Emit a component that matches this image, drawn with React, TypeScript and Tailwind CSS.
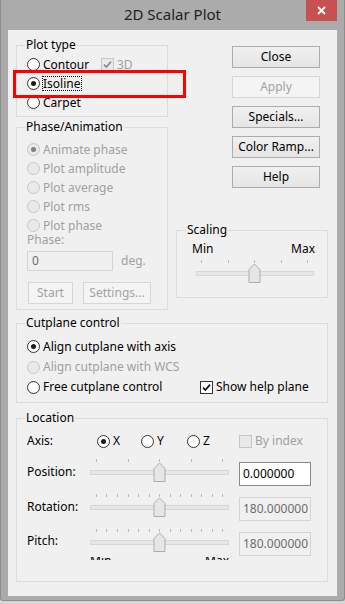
import type { ReactNode } from "react"

/*
 ====================================
 SMALL WIN8 CONTROLS
 ====================================
*/

function Radio({
 checked = false,
 disabled = false,
}: {
 checked?: boolean
 disabled?: boolean
}) {
 return (
  <span
   className={`
    flex
    h-[13px]
    w-[13px]
    shrink-0
    items-center
    justify-center
    rounded-full
    border
    ${disabled ? "border-[#c6c6c6] bg-[#e9e9e9]" : "border-[#333333] bg-white"}
   `}
  >
   {checked && (
    <span
     className={`
      h-[5px]
      w-[5px]
      rounded-full
      ${disabled ? "bg-[#7f7f7f]" : "bg-[#1b1b1b]"}
     `}
    />
   )}
  </span>
 )
}

function Check({
 checked = false,
 disabled = false,
}: {
 checked?: boolean
 disabled?: boolean
}) {
 return (
  <span
   className={`
    flex
    h-[13px]
    w-[13px]
    shrink-0
    items-center
    justify-center
    border
    ${disabled ? "border-[#c6c6c6] bg-[#e9e9e9]" : "border-[#333333] bg-white"}
   `}
  >
   {checked && (
    <svg width="9" height="9" viewBox="0 0 9 9">
     <path
      d="M1 4.6 L3.4 7 L8 1.6"
      fill="none"
      stroke={disabled ? "#8c8c8c" : "#111111"}
      strokeWidth="1.7"
     />
    </svg>
   )}
  </span>
 )
}

function Btn({
 children,
 disabled = false,
 w,
}: {
 children: ReactNode
 disabled?: boolean
 w: string
}) {
 return (
  <div
   className={`
    flex
    h-[22px]
    ${w}
    items-center
    justify-center
    border
    ${disabled
     ? "border-[#d6d6d6] bg-[#f4f4f4] text-[#a3a3a3]"
     : "border-[#acacac] bg-linear-to-b from-[#f0f0f0] to-[#e5e5e5] text-black"}
   `}
  >
   {children}
  </div>
 )
}

function Slider({
 width,
 ticks,
 thumb,
}: {
 width: number
 ticks: number[]
 thumb: number
}) {
 return (
  <svg width={width} height={24} className="block">
   {ticks.map((x) => (
    <line
     key={x}
     x1={x + 0.5}
     x2={x + 0.5}
     y1={0}
     y2={3}
     stroke="#b9b9b9"
    />
   ))}
   <rect
    x={0.5}
    y={11.5}
    width={width - 1}
    height={4}
    fill="#e7e7e7"
    stroke="#d6d6d6"
   />
   <path
    d={`M${thumb - 5} 9.5 L${thumb + 0.5} 4 L${thumb + 6} 9.5 L${thumb + 6} 22.5 L${thumb - 5} 22.5 Z`}
    fill="#e6e6e6"
    stroke="#adadad"
   />
  </svg>
 )
}

const fine = [
 6, 16, 27, 38, 48, 59, 69, 80, 90, 101, 111, 122, 132,
]

function Field({
 value,
 disabled = false,
}: {
 value: string
 disabled?: boolean
}) {
 return (
  <div
   className={`
    ml-[10px]
    mt-[5px]
    h-[24px]
    w-[72px]
    overflow-hidden
    whitespace-nowrap
    border
    pl-[3px]
    leading-[22px]
    ${disabled
     ? "border-[#d4d4d4] bg-[#f0f0f0] text-[#6d6d6d]"
     : "border-[#8a8a8a] bg-white text-black"}
   `}
  >
   {value}
  </div>
 )
}

const gray = "text-[#a0a0a0]"

export default function App() {
 return (
  <div
   className="
    h-[604px]
    w-[345px]
    bg-[#d6d6d6]
    font-['Noto_Sans',sans-serif]
    text-[12px]
    leading-[16px]
    text-black
   "
  >
   <div
    className="
     h-[601px]
     w-[345px]
     rounded-b-[3px]
     border-x
     border-b
     border-[#8c8c8c]
     bg-[#ababab]
    "
   >

    {/* TITLE BAR */}

    <div className="grid h-[30px] grid-cols-[1fr_auto_1fr]">
     <div />
     <div className="pt-[4px] text-[15px] leading-[20px] text-[#222222]">
      2D Scalar Plot
     </div>
     <div className="flex justify-end pr-[7px]">
      <div className="flex h-[21px] w-[31px] items-center justify-center bg-[#c75050]">
       <svg width="9" height="9" viewBox="0 0 9 9">
        <path d="M1 1 L8 8 M8 1 L1 8" stroke="white" strokeWidth="1.8" />
       </svg>
      </div>
     </div>
    </div>

    {/* CLIENT */}

    <div
     className="
      relative
      ml-[7px]
      h-[566px]
      w-[329px]
      bg-[#f0f0f0]
      pl-[8px]
      pt-[7px]
     "
    >
     <div className="flex gap-[8px]">

      {/* LEFT COLUMN */}

      <div className="w-[152px]">
       <fieldset className="h-[80px] border border-[#dcdcdc]">
        <legend className="ml-[8px] px-px">Plot type</legend>
        <div className="pl-[10px] pt-[2px]">
         <div className="flex h-[19px] items-center">
          <Radio />
          <span className="ml-[3px] w-[58px]">Contour</span>
          <Check checked disabled />
          <span className={`ml-[3px] ${gray}`}>3D</span>
         </div>
         <div className="flex h-[19px] items-center">
          <Radio checked />
          <span
           className="
            ml-[2px]
            border
            border-dotted
            border-black
            pr-px
            leading-[13px]
           "
          >
           Isoline
          </span>
         </div>
         <div className="flex h-[19px] items-center">
          <Radio />
          <span className="ml-[3px]">Carpet</span>
         </div>
        </div>
       </fieldset>

       <fieldset className="mt-[2px] h-[191px] border border-[#dcdcdc]">
        <legend className="ml-[8px] px-px">Phase/Animation</legend>
        <div className="pl-[10px] pt-[5px]">
         {[
          "Animate phase",
          "Plot amplitude",
          "Plot average",
          "Plot rms",
          "Plot phase",
         ].map((label, i) => (
          <div key={label} className="flex h-[19px] items-center">
           <Radio checked={i === 0} disabled />
           <span className={`ml-[3px] ${gray}`}>{label}</span>
          </div>
         ))}

         <div className={`h-[10px] leading-[10px] ${gray}`}>Phase:</div>

         <div className="mt-[6px] flex items-center">
          <div
           className="
            h-[20px]
            w-[86px]
            border
            border-[#d4d4d4]
            pl-[4px]
            leading-[18px]
            text-[#6d6d6d]
           "
          >
           0
          </div>
          <span className={`ml-[8px] ${gray}`}>deg.</span>
         </div>

         <div className="ml-px mt-[11px] flex gap-[10px]">
          <Btn disabled w="w-[45px]">Start</Btn>
          <Btn disabled w="w-[68px]">Settings...</Btn>
         </div>
        </div>
       </fieldset>
      </div>

      {/* RIGHT COLUMN */}

      <div className="w-[152px]">
       <div className="ml-[56px] mt-[9px] flex flex-col gap-[8px]">
        <Btn w="w-[88px]">Close</Btn>
        <Btn disabled w="w-[88px]">Apply</Btn>
        <Btn w="w-[88px]">Specials...</Btn>
        <Btn w="w-[88px]">Color Ramp...</Btn>
        <Btn w="w-[88px]">Help</Btn>
       </div>

       <fieldset className="mt-[34px] h-[76px] border border-[#dcdcdc]">
        <legend className="ml-[9px] px-px">Scaling</legend>
        <div className="mt-[3px] flex h-[16px] justify-between pl-[15px] pr-[12px]">
         <span>Min</span>
         <span>Max</span>
        </div>
        <div className="ml-[19px] mt-[3px]">
         <Slider width={118} ticks={[5, 32, 58, 85, 111]} thumb={58} />
        </div>
       </fieldset>
      </div>
     </div>

     {/* CUTPLANE CONTROL */}

     <fieldset className="mt-[5px] h-[88px] w-[312px] border border-[#dcdcdc]">
      <legend className="ml-[8px] px-px">Cutplane control</legend>
      <div className="pl-[10px] pt-[5px]">
       <div className="flex h-[21px] items-center">
        <Radio checked />
        <span className="ml-[3px]">Align cutplane with axis</span>
       </div>
       <div className="flex h-[20px] items-center">
        <Radio disabled />
        <span className={`ml-[3px] ${gray}`}>Align cutplane with WCS</span>
       </div>
       <div className="flex h-[20px] items-center">
        <div className="flex w-[173px] items-center">
         <Radio />
         <span className="ml-[3px]">Free cutplane control</span>
        </div>
        <Check checked />
        <span className="ml-[3px]">Show help plane</span>
       </div>
      </div>
     </fieldset>

     {/* LOCATION */}

     <fieldset className="mt-[7px] h-[172px] w-[312px] border border-[#dcdcdc]">
      <legend className="ml-[8px] px-px">Location</legend>
      <div className="pl-[10px]">
       <div className="mt-[5px] flex h-[20px] items-center">
        <span className="w-[70px]">Axis:</span>
        <div className="flex w-[44px] items-center">
         <Radio checked />
         <span className="ml-[3px]">X</span>
        </div>
        <div className="flex w-[46px] items-center">
         <Radio />
         <span className="ml-[3px]">Y</span>
        </div>
        <div className="flex w-[52px] items-center">
         <Radio />
         <span className="ml-[3px]">Z</span>
        </div>
        <Check disabled />
        <span className={`ml-[3px] ${gray}`}>By index</span>
       </div>

       <div className="mt-[6px] flex h-[35px] items-start">
        <span className="mt-[7px] w-[63px]">Position:</span>
        <div className="mt-[2px]">
         <Slider width={139} ticks={[6, 38, 69, 101, 132]} thumb={69} />
        </div>
        <Field value="0.000000" />
       </div>

       <div className="flex h-[35px] items-start">
        <span className="mt-[7px] w-[63px]">Rotation:</span>
        <div className="mt-[2px]">
         <Slider width={139} ticks={fine} thumb={69} />
        </div>
        <Field value="180.000000" disabled />
       </div>

       <div className="flex h-[35px] items-start">
        <span className="mt-[6px] w-[63px]">Pitch:</span>
        <div className="mt-[2px] w-[139px]">
         <Slider width={139} ticks={fine} thumb={69} />
         <div className="mt-[4px] h-[3px] overflow-hidden">
          <div className="-mt-[4px] flex justify-between">
           <span>Min</span>
           <span>Max</span>
          </div>
         </div>
        </div>
        <Field value="180.000000" disabled />
       </div>
      </div>
     </fieldset>

     {/* HIGHLIGHT */}

     <div
      className="
       absolute
       left-[5px]
       top-[40px]
       h-[28px]
       w-[173px]
       border-[3px]
       border-[#ff0000]
      "
     />
    </div>
   </div>
  </div>
 )
}
